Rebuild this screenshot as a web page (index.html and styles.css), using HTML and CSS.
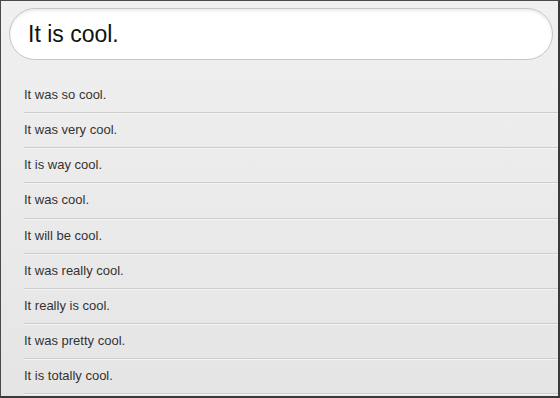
FILE: index.html
```
<!DOCTYPE html>
<html>
<head>
<meta charset="utf-8">
<link rel="stylesheet" href="styles.css">
</head>
<body>
<div class="frame">
  <div class="search">
    <div class="field">It is cool.</div>
  </div>
  <ul class="list">
    <li>It was so cool.</li>
    <li>It was very cool.</li>
    <li>It is way cool.</li>
    <li>It was cool.</li>
    <li>It will be cool.</li>
    <li>It was really cool.</li>
    <li>It really is cool.</li>
    <li>It was pretty cool.</li>
    <li>It is totally cool.</li>
  </ul>
</div>
</body>
</html>
```
FILE: styles.css
```
html, body {
  margin: 0;
  padding: 0;
}
body {
  width: 560px;
  height: 398px;
  overflow: hidden;
  font-family: "Liberation Sans", Arial, sans-serif;
}
.frame {
  box-sizing: border-box;
  width: 560px;
  height: 398px;
  border-left: 1px solid #4a4a4a;
  border-top: 1px solid #4a4a4a;
  border-right: 2px solid #3a3a3a;
  border-bottom: 2px solid #3a3a3a;
  background: linear-gradient(#f0f0f0, #e5e5e5);
  overflow: hidden;
}
.search {
  padding: 7px 5px 0 8px;
}
.field {
  box-sizing: border-box;
  height: 52px;
  border: 1px solid #c6c6c6;
  border-radius: 26px;
  background: #fff;
  box-shadow: inset 0 2px 3px rgba(0,0,0,0.08);
  padding: 0 18px;
  font-size: 23px;
  line-height: 50px;
  color: #111;
}
.list {
  list-style: none;
  margin: 18px 0 0 23px;
  padding: 0;
}
.list li {
  height: 34.125px;
  line-height: 34px;
  border-bottom: 1px solid #cdcdcd;
  box-shadow: 0 1px 0 #f4f4f4;
  font-size: 13px;
  color: #333;
}
```
